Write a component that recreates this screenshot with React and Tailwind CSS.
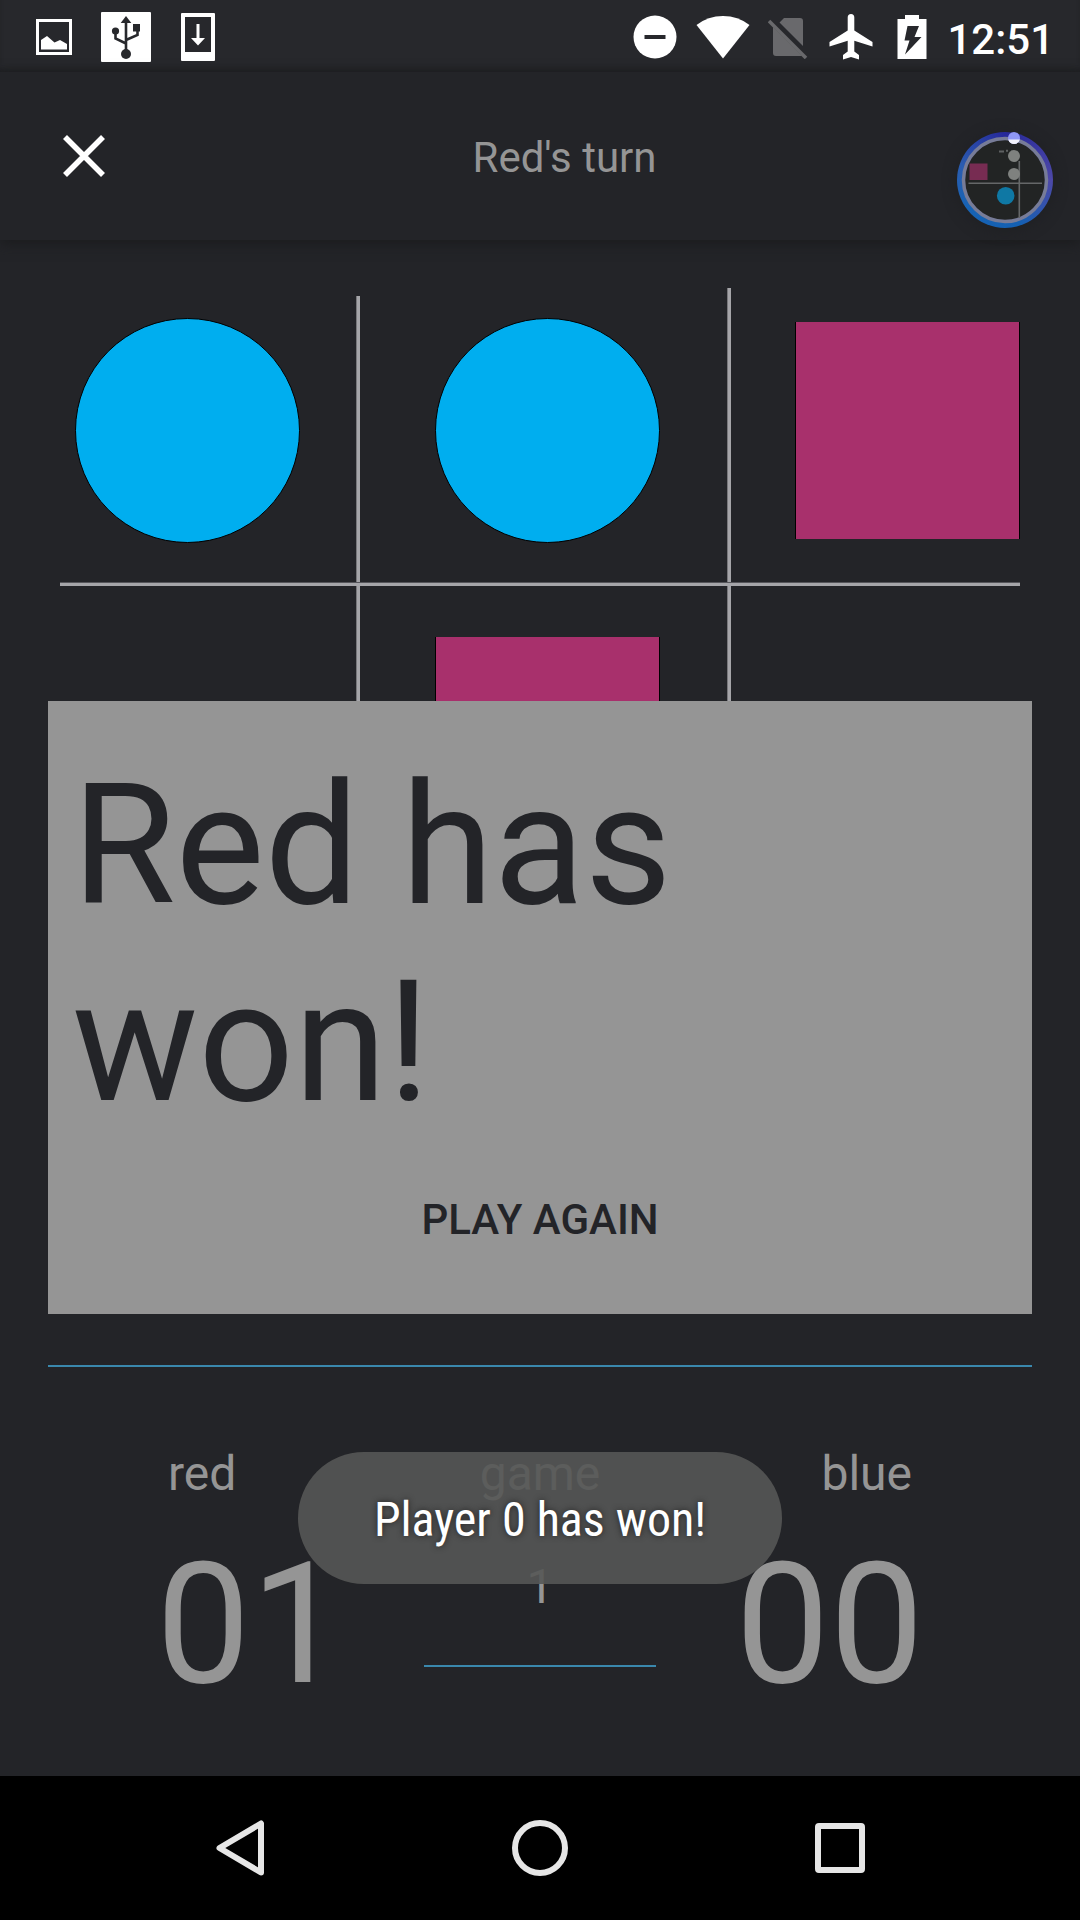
import React from "react";

function StatusBar() {
  return (
    <div className="flex h-[72px] items-center justify-between bg-[#27282c] pt-[2px] pl-[36px] pr-[26px] text-white shadow-[inset_0_-5px_5px_-2px_#1f2023]">
      <div className="flex h-full items-center gap-[29px]">
        <svg viewBox="0 0 36 36" className="h-[36px] w-[36px]" aria-label="Screenshot saved">
          <rect x="1.5" y="1.5" width="33" height="33" fill="none" stroke="currentColor" strokeWidth="3" />
          <path d="M5 21 L11 17 L18.500 23.500 L24 21 L31 25 V30.500 H5 Z" fill="currentColor" />
        </svg>
        <svg viewBox="0 0 50 50" className="h-[50px] w-[50px]" aria-label="USB connected">
          <rect width="50" height="50" rx="1" fill="currentColor" />
          <g fill="#27282c" stroke="none">
            <path d="M25 4 L30.300 11 H19.700 Z" />
            <circle cx="14.500" cy="19" r="3.600" />
            <rect x="32" y="12" width="7" height="7.500" />
            <circle cx="25" cy="42" r="5" />
          </g>
          <path d="M25 10 V40 M14.500 20 V26.500 L25 31.500 M36.500 18 V23 L25 28" fill="none" stroke="#27282c" strokeWidth="2.600" />
        </svg>
        <svg viewBox="0 0 34 48" className="ml-[1px] h-[48px] w-[34px]" aria-label="Update available">
          <path fillRule="evenodd" fill="currentColor" d="M1 0 H33 V0 Q34 0 34 1 V47 Q34 48 33 48 H1 Q0 48 0 47 V1 Q0 0 1 0 Z M4 4 V39 H30 V4 Z" />
          <path d="M15.500 11 H18.500 V25 H24 L17 32.500 L10 25 H15.500 Z" fill="currentColor" />
        </svg>
      </div>
      <div className="flex h-full items-center">
        <svg viewBox="0 0 44 44" className="h-[44px] w-[44px]" aria-label="Do not disturb">
          <circle cx="22" cy="22" r="21.500" fill="currentColor" />
          <rect x="11.500" y="20" width="21" height="4" fill="#27282c" />
        </svg>
        <svg viewBox="0 0 54 44" className="ml-[19px] h-[44px] w-[54px]" aria-label="Wi-Fi">
          <path d="M27 43.500 L0.500 10 Q12 1 27 1 Q42 1 53.500 10 Z" fill="currentColor" />
        </svg>
        <svg viewBox="0 0 40 44" className="ml-[18px] h-[44px] w-[40px]" aria-label="No SIM card">
          <path d="M16 3 H32 Q35 3 35 6 V31 L11.500 7.500 Z M5 12 L34 41 H8 Q5 41 5 38 Z" fill="#69696c" />
          <path d="M1 6 L38 43" stroke="#69696c" strokeWidth="3.500" />
        </svg>
        <svg viewBox="0 0 44 46" className="ml-[21px] h-[46px] w-[44px]" aria-label="Airplane mode">
          <path d="M18.700 3.500 Q18.700 0 22 0 Q25.300 0 25.300 3.500 V16.500 L43.500 28 V32.500 L25.300 26.700 V37.500 L30 41 V45.500 L22 43 L14 45.500 V41 L18.700 37.500 V26.700 L0.500 32.500 V28 L18.700 16.500 Z" fill="currentColor" />
        </svg>
        <svg viewBox="0 0 30 44" className="ml-[24px] h-[44px] w-[30px]" aria-label="Battery charging">
          <path fillRule="evenodd" d="M8 0 H22 V4 H29.500 V44 H0.500 V4 H8 Z M10.500 11 L7.500 25.500 H12.500 L8 39.500 L24.500 22 H17.500 L22 11 Z" fill="currentColor" />
        </svg>
        <time className="ml-[20px] pt-[5px] text-[42px] leading-[48px] font-medium">12:51</time>
      </div>
    </div>
  );
}

function RecorderBubble() {
  return (
    <div className="pointer-events-none absolute right-[27px] bottom-[12px] h-[96px] w-[96px] rounded-full bg-[conic-gradient(#26289a,#4d48a8_25%,#1460b2_45%,#1763b4_65%,#2a5cb0_80%,#26289a)] shadow-[0_2px_14px_#1f2023]">
      <svg viewBox="0 0 96 96" className="h-full w-full" aria-hidden="true">
        <circle cx="48" cy="48" r="41.500" fill="#222424" stroke="#777c98" strokeWidth="3.500" />
        <rect x="12.500" y="31.500" width="18" height="16.500" fill="#772c52" />
        <path d="M11.500 51.300 H85 M62.300 29 V86" stroke="#656768" strokeWidth="1.600" />
        <circle cx="48.700" cy="63.700" r="8.800" fill="#0f78a4" />
        <path d="M42 19.500 H47 M49 18.800 H51 M54 19.500 H57" stroke="#5f6162" strokeWidth="2" />
        <circle cx="57" cy="6" r="6" fill="#8f97f5" />
        <path d="M51.300 7.500 L62.900 7.500 A6 6 0 0 1 51.300 7.500 Z" fill="#f2f3fb" />
        <circle cx="57" cy="24" r="6" fill="#7f817f" />
        <circle cx="57" cy="42" r="6" fill="#7f817f" />
      </svg>
    </div>
  );
}

function Header() {
  return (
    <header className="relative z-10 flex h-[168px] items-center bg-[#232428] shadow-[0_4px_12px_#1b1c1e]">
      <button type="button" aria-label="Close" className="flex h-full w-[168px] items-center justify-center text-white">
        <svg viewBox="0 0 42 42" className="h-[42px] w-[42px]">
          <path d="M2 2 L40 40 M40 2 L2 40" stroke="currentColor" strokeWidth="5.600" />
        </svg>
      </button>
      <h1 className="flex-1 pt-[4px] text-center text-[42px] leading-[48px] text-[#959595]">Red's turn</h1>
      <button type="button" aria-label="More options" className="h-full w-[119px]" />
      <RecorderBubble />
    </header>
  );
}

function Piece({ kind }) {
  if (kind === "blue") {
    return <span className="block h-[225px] w-full rounded-[50%] border border-black bg-[#00aeef]" />;
  }
  if (kind === "red") {
    return <span className="block h-[217px] w-full border-x border-black bg-[#a8306c]" />;
  }
  return null;
}

const CELLS = ["blue", "blue", "red", "", "red", "", "red", "", ""];

function Board() {
  return (
    <section aria-label="Board" className="relative px-[60px] pt-[78px]">
      <div className="grid grid-cols-3 gap-x-[120px] gap-y-[90px]">
        {CELLS.map((kind, i) => (
          <button key={i} type="button" aria-label={`Cell ${i + 1} ${kind}`} className="flex h-[225px] items-center pl-[15px]">
            <Piece kind={kind} />
          </button>
        ))}
      </div>
      <span className="absolute top-[56px] bottom-0 left-[33%] w-[4px] border-l border-[#77777b] bg-[#a5a5a9]" />
      <span className="absolute top-[48px] right-[349px] bottom-0 w-[4px] border-l border-[#77777b] bg-[#a5a5a9]" />
      <span className="absolute inset-x-[60px] top-[342px] h-[4px] border-t border-[#55555a] bg-[#a5a5a9]" />
    </section>
  );
}

function ResultDialog() {
  return (
    <div role="dialog" aria-label="Game result" className="absolute inset-x-[48px] top-[461px] flex flex-col bg-[#959595] px-[24px] pt-[46px] pb-[23px] text-[#232428]">
      <p className="text-[168px] leading-[197px]">Red has won!</p>
      <button type="button" className="mt-[6px] h-[144px] self-center px-[24px] text-[42px] font-medium">
        PLAY AGAIN
      </button>
    </div>
  );
}

function Score({ label, value, align }) {
  return (
    <div className={align}>
      <h2 className="px-[12px] text-[48px] leading-[56px]">{label}</h2>
      <p className="mt-[24px] text-[168px] leading-[197px]">{value}</p>
    </div>
  );
}

function Scoreboard() {
  return (
    <section aria-label="Score" className="mx-[48px] mt-[192px] flex justify-between border-t-2 border-[#3a88ad] px-[108px] pt-[79px] text-[#959595]">
      <Score label="red" value="01" align="text-left" />
      <div className="w-[232px] text-center text-[48px] leading-[56px]">
        <h2>game</h2>
        <p className="mt-[57px] border-b-2 border-[#3a88ad] pb-[50px]">1</p>
      </div>
      <Score label="blue" value="00" align="text-right" />
    </section>
  );
}

function Toast() {
  return (
    <div role="status" className="absolute inset-x-0 bottom-[192px] flex justify-center">
      <div className="flex h-[132px] items-center justify-center rounded-full bg-[#555755]/90 px-[76px] pt-[3px] font-['Roboto_Condensed','Roboto',sans-serif] text-[48px] whitespace-nowrap text-white [text-shadow:0_0_6px_#222]">
        Player 0 has won!
      </div>
    </div>
  );
}

function NavBar() {
  return (
    <nav className="flex h-[144px] items-center justify-center bg-black px-[90px] text-[#e6e6e6]">
      <button type="button" aria-label="Back" className="flex h-full flex-1 items-center justify-center">
        <svg viewBox="0 0 48 56" className="h-[56px] w-[48px]">
          <path d="M45 3.500 V52.500 L3.500 28 Z" fill="none" stroke="currentColor" strokeWidth="6" strokeLinejoin="round" />
        </svg>
      </button>
      <button type="button" aria-label="Home" className="flex h-full flex-1 items-center justify-center">
        <span className="h-[56px] w-[56px] rounded-full border-6 border-[#e6e6e6]" />
      </button>
      <button type="button" aria-label="Recent apps" className="flex h-full flex-1 items-center justify-center">
        <span className="h-[50px] w-[50px] rounded-[4px] border-6 border-[#e6e6e6]" />
      </button>
    </nav>
  );
}

export default function App() {
  return (
    <div className="flex min-h-screen flex-col bg-[#232428] font-['Roboto',sans-serif]">
      <StatusBar />
      <Header />
      <main className="relative flex-1">
        <Board />
        <ResultDialog />
        <Scoreboard />
        <Toast />
      </main>
      <NavBar />
    </div>
  );
}
